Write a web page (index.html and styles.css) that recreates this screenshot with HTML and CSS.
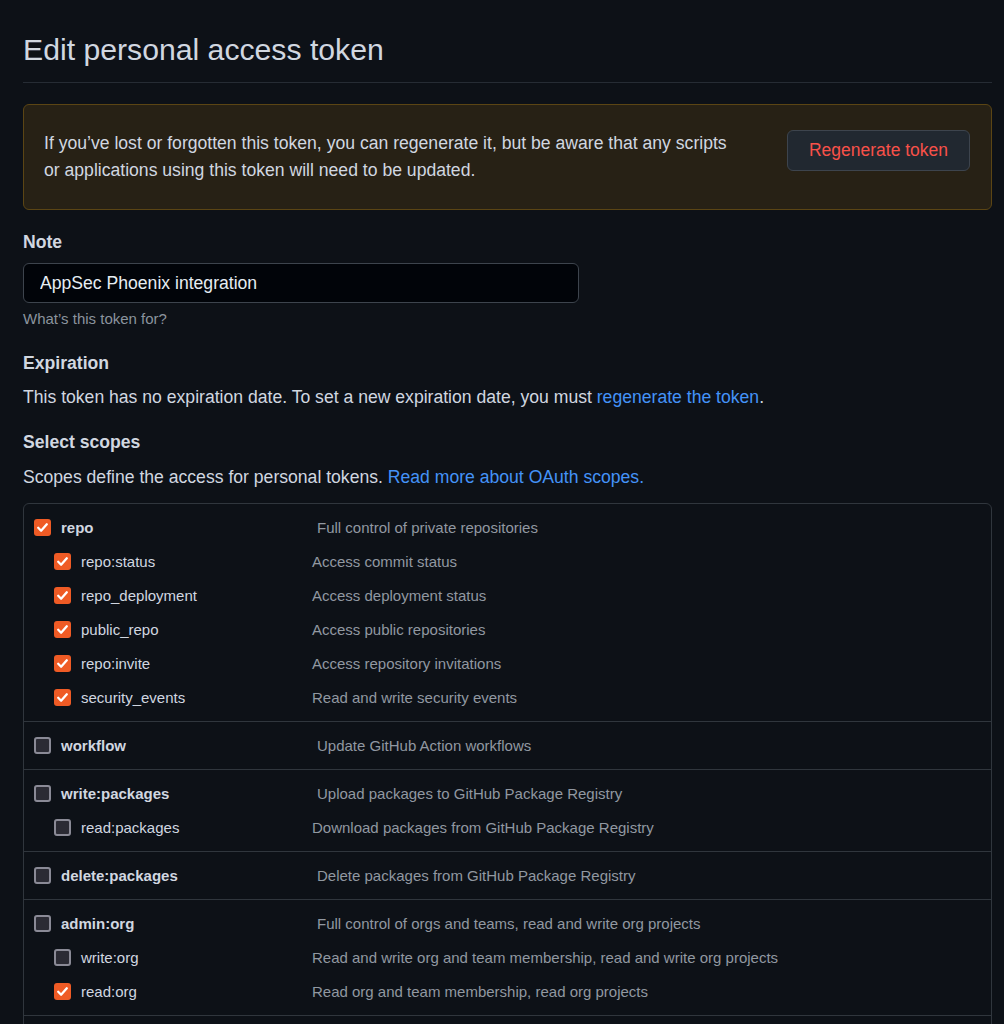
FILE: index.html
```html
<!DOCTYPE html>
<html lang="en">
<head>
<meta charset="utf-8">
<title>Edit personal access token</title>
<link rel="stylesheet" href="styles.css">
</head>
<body>
<main class="page">
  <h1 class="title">Edit personal access token</h1>

  <div class="flash">
    <p class="flash-text">If you’ve lost or forgotten this token, you can regenerate it, but be aware that any scripts or applications using this token will need to be updated.</p>
    <button class="btn-danger" type="button">Regenerate token</button>
  </div>

  <label class="label label-note" for="note">Note</label>
  <input class="input" id="note" type="text" value="AppSec Phoenix integration">
  <p class="help">What’s this token for?</p>

  <h2 class="label label-exp">Expiration</h2>
  <p class="text">This token has no expiration date. To set a new expiration date, you must <a class="link" href="#">regenerate the token</a>.</p>

  <h2 class="label label-scopes">Select scopes</h2>
  <p class="text text-scopes">Scopes define the access for personal tokens. <a class="link" href="#">Read more about OAuth scopes.</a></p>

  <div class="scopes">
    <div class="group">
      <div class="row top"><span class="cb on"><svg viewBox="0 0 17 17"><path d="M4.2 8.8l2.9 2.9 5.7-6.4"/></svg></span><span class="name">repo</span><span class="desc">Full control of private repositories</span></div>
      <div class="row sub"><span class="cb on"><svg viewBox="0 0 17 17"><path d="M4.2 8.8l2.9 2.9 5.7-6.4"/></svg></span><span class="name">repo:status</span><span class="desc">Access commit status</span></div>
      <div class="row sub"><span class="cb on"><svg viewBox="0 0 17 17"><path d="M4.2 8.8l2.9 2.9 5.7-6.4"/></svg></span><span class="name">repo_deployment</span><span class="desc">Access deployment status</span></div>
      <div class="row sub"><span class="cb on"><svg viewBox="0 0 17 17"><path d="M4.2 8.8l2.9 2.9 5.7-6.4"/></svg></span><span class="name">public_repo</span><span class="desc">Access public repositories</span></div>
      <div class="row sub"><span class="cb on"><svg viewBox="0 0 17 17"><path d="M4.2 8.8l2.9 2.9 5.7-6.4"/></svg></span><span class="name">repo:invite</span><span class="desc">Access repository invitations</span></div>
      <div class="row sub"><span class="cb on"><svg viewBox="0 0 17 17"><path d="M4.2 8.8l2.9 2.9 5.7-6.4"/></svg></span><span class="name">security_events</span><span class="desc">Read and write security events</span></div>
    </div>
    <div class="group">
      <div class="row top"><span class="cb"></span><span class="name">workflow</span><span class="desc">Update GitHub Action workflows</span></div>
    </div>
    <div class="group">
      <div class="row top"><span class="cb"></span><span class="name">write:packages</span><span class="desc">Upload packages to GitHub Package Registry</span></div>
      <div class="row sub"><span class="cb"></span><span class="name">read:packages</span><span class="desc">Download packages from GitHub Package Registry</span></div>
    </div>
    <div class="group">
      <div class="row top"><span class="cb"></span><span class="name">delete:packages</span><span class="desc">Delete packages from GitHub Package Registry</span></div>
    </div>
    <div class="group">
      <div class="row top"><span class="cb"></span><span class="name">admin:org</span><span class="desc">Full control of orgs and teams, read and write org projects</span></div>
      <div class="row sub"><span class="cb"></span><span class="name">write:org</span><span class="desc">Read and write org and team membership, read and write org projects</span></div>
      <div class="row sub"><span class="cb on"><svg viewBox="0 0 17 17"><path d="M4.2 8.8l2.9 2.9 5.7-6.4"/></svg></span><span class="name">read:org</span><span class="desc">Read org and team membership, read org projects</span></div>
    </div>
    <div class="group group-more"></div>
  </div>
</main>
</body>
</html>
```

FILE: styles.css
```css
html, body {
  margin: 0;
  padding: 0;
  background: #0d1117;
}

body {
  font-family: "Liberation Sans", Arial, Helvetica, sans-serif;
  color: #e6edf3;
  overflow: hidden;
}

.page {
  width: 969px;
  margin-left: 23px;
  display: flex;
  flex-direction: column;
  align-items: flex-start;
}

.title {
  align-self: stretch;
  margin: 31px 0 0;
  padding-bottom: 13px;
  font-size: 30.2px;
  line-height: 38px;
  font-weight: 400;
  color: #d1d7e0;
  border-bottom: 1px solid #262c34;
}

.flash {
  align-self: stretch;
  box-sizing: border-box;
  margin-top: 21px;
  height: 106px;
  padding: 25px 21px 0 20px;
  background: #272115;
  border: 1px solid #5b4514;
  border-radius: 6px;
  display: flex;
  justify-content: space-between;
  align-items: flex-start;
}

.flash-text {
  margin: 0;
  max-width: 700px;
  font-size: 17.6px;
  line-height: 27px;
  color: #d1d7e0;
}

.btn-danger {
  width: 183px;
  height: 41px;
  margin-top: 0;
  background: #212830;
  border: 1px solid #3d444d;
  border-radius: 6px;
  color: #f85149;
  font-family: inherit;
  font-size: 17.5px;
  padding: 0;
}

.label {
  display: block;
  margin: 0;
  font-size: 17.6px;
  line-height: 24px;
  font-weight: 700;
  color: #d1d7e0;
}

.label-note { margin-top: 20px; }
.label-exp { margin-top: 22px; }
.label-scopes { margin-top: 21px; }

.input {
  box-sizing: border-box;
  margin-top: 9px;
  width: 556px;
  height: 40px;
  padding: 0 16px;
  background: #010409;
  border: 1px solid #3d444d;
  border-radius: 6px;
  color: #e6edf3;
  font-family: inherit;
  font-size: 17.6px;
  outline: none;
}

.help {
  margin: 6px 0 0;
  font-size: 15px;
  line-height: 20px;
  color: #8b949e;
}

.text {
  margin: 10px 0 0;
  font-size: 17.6px;
  line-height: 24px;
  color: #d1d7e0;
}

.text-scopes { margin-top: 11px; }

.link {
  color: #4493f8;
  text-decoration: none;
}

.scopes {
  align-self: stretch;
  margin-top: 14px;
  border: 1px solid #30363d;
  border-radius: 6px;
}

.group {
  padding: 6px 10px 7px;
}

.group + .group {
  border-top: 1px solid #30363d;
}

.group-more {
  height: 60px;
}

.row {
  display: flex;
  align-items: center;
  height: 34px;
  font-size: 15px;
}

.row.sub {
  padding-left: 20px;
}

.cb {
  box-sizing: border-box;
  flex: none;
  width: 17px;
  height: 17px;
  margin-right: 10px;
  border: 2px solid #8a8a96;
  border-radius: 3px;
  background: #2b2b34;
  display: flex;
}

.cb.on {
  border: none;
  background: #ef5b25;
}

.cb svg {
  width: 17px;
  height: 17px;
  fill: none;
  stroke: #ffffff;
  stroke-width: 2.3;
  stroke-linecap: round;
  stroke-linejoin: round;
}

.name {
  color: #d1d7e0;
}

.top .name {
  width: 256px;
  font-weight: 700;
}

.sub .name {
  width: 231px;
}

.desc {
  color: #9198a1;
}
```
